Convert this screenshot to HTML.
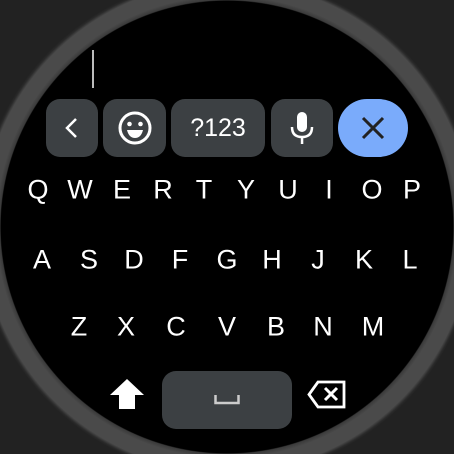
<!DOCTYPE html>
<html><head><style>
html,body{margin:0;padding:0;width:454px;height:454px;overflow:hidden;font-family:"Liberation Sans",sans-serif}
body{background:radial-gradient(circle at 227px 227px,#000 0,#000 226px,#3a3a3a 227px,#4a4a4a 231px,#4a4a4a 245px,#2a2a2a 248px,#222 250px)}
.k{position:absolute;color:#fff;font-size:27px;line-height:1;transform:translate(-50%,-50%)}
.b{position:absolute;background:#3c4043;border-radius:14px;top:99px;height:58px;display:flex;align-items:center;justify-content:center;color:#fff}
</style></head><body>
<div style="position:absolute;left:92px;top:50px;width:2px;height:38px;background:#bbb"></div>
<div class="b" style="left:46px;width:52px"><svg width="20" height="24" viewBox="0 0 20 24"><path d="M14 3 L5 12 L14 21" stroke="#fff" stroke-width="2.5" fill="none"/></svg></div>
<div class="b" style="left:103px;width:63px"><svg width="36" height="36" viewBox="0 0 36 36"><circle cx="18" cy="18" r="15" stroke="#fff" stroke-width="3" fill="none"/><circle cx="12.5" cy="14" r="2.3" fill="#fff"/><circle cx="23.5" cy="14" r="2.3" fill="#fff"/><path d="M10 20 H26 Q24 28 18 28 Q12 28 10 20Z" fill="#fff"/></svg></div>
<div class="b" style="left:171px;width:94px;font-size:25px">?123</div>
<div class="b" style="left:271px;width:62px"><svg width="28" height="36" viewBox="0 0 28 36"><rect x="9" y="2" width="10" height="20" rx="5" fill="#fff"/><path d="M4 17 Q4 27 14 27 Q24 27 24 17" stroke="#fff" stroke-width="2.5" fill="none"/><rect x="12.8" y="26" width="2.5" height="8" fill="#fff"/></svg></div>
<div class="b" style="left:338px;width:70px;background:#7aabfb;border-radius:29px"><svg width="26" height="26" viewBox="0 0 26 26"><path d="M3 3 L23 23 M23 3 L3 23" stroke="#222" stroke-width="3"/></svg></div>

<div class="k" style="left:38px;top:190px">Q</div><div class="k" style="left:80px;top:190px">W</div><div class="k" style="left:122px;top:190px">E</div><div class="k" style="left:163px;top:190px">R</div><div class="k" style="left:204px;top:190px">T</div><div class="k" style="left:246px;top:190px">Y</div><div class="k" style="left:288px;top:190px">U</div><div class="k" style="left:329px;top:190px">I</div><div class="k" style="left:372px;top:190px">O</div><div class="k" style="left:412px;top:190px">P</div>
<div class="k" style="left:42px;top:260px">A</div><div class="k" style="left:89px;top:260px">S</div><div class="k" style="left:134px;top:260px">D</div><div class="k" style="left:180px;top:260px">F</div><div class="k" style="left:227px;top:260px">G</div><div class="k" style="left:272px;top:260px">H</div><div class="k" style="left:318px;top:260px">J</div><div class="k" style="left:364px;top:260px">K</div><div class="k" style="left:410px;top:260px">L</div>
<div class="k" style="left:79px;top:327px">Z</div><div class="k" style="left:126px;top:327px">X</div><div class="k" style="left:176px;top:327px">C</div><div class="k" style="left:227px;top:327px">V</div><div class="k" style="left:276px;top:327px">B</div><div class="k" style="left:323px;top:327px">N</div><div class="k" style="left:373px;top:327px">M</div>

<svg style="position:absolute;left:110px;top:379px" width="34" height="30" viewBox="0 0 34 30"><path d="M17 0 L34 16 H25 V30 H9 V16 H0 Z" fill="#fff"/></svg>
<div class="b" style="left:162px;top:371px;width:130px;height:58px;border-radius:14px"><svg width="26" height="10" viewBox="0 0 26 10"><path d="M1.5 0 V8 H24.5 V0" stroke="#ccc" stroke-width="2.5" fill="none"/></svg></div>
<svg style="position:absolute;left:307px;top:380px" width="40" height="30" viewBox="0 0 40 30"><path d="M11 2 H37 V27 H11 L2 14.5 Z" stroke="#fff" stroke-width="2.8" fill="none"/><path d="M18 8 L30 20 M30 8 L18 20" stroke="#fff" stroke-width="3"/></svg>
</body></html>
